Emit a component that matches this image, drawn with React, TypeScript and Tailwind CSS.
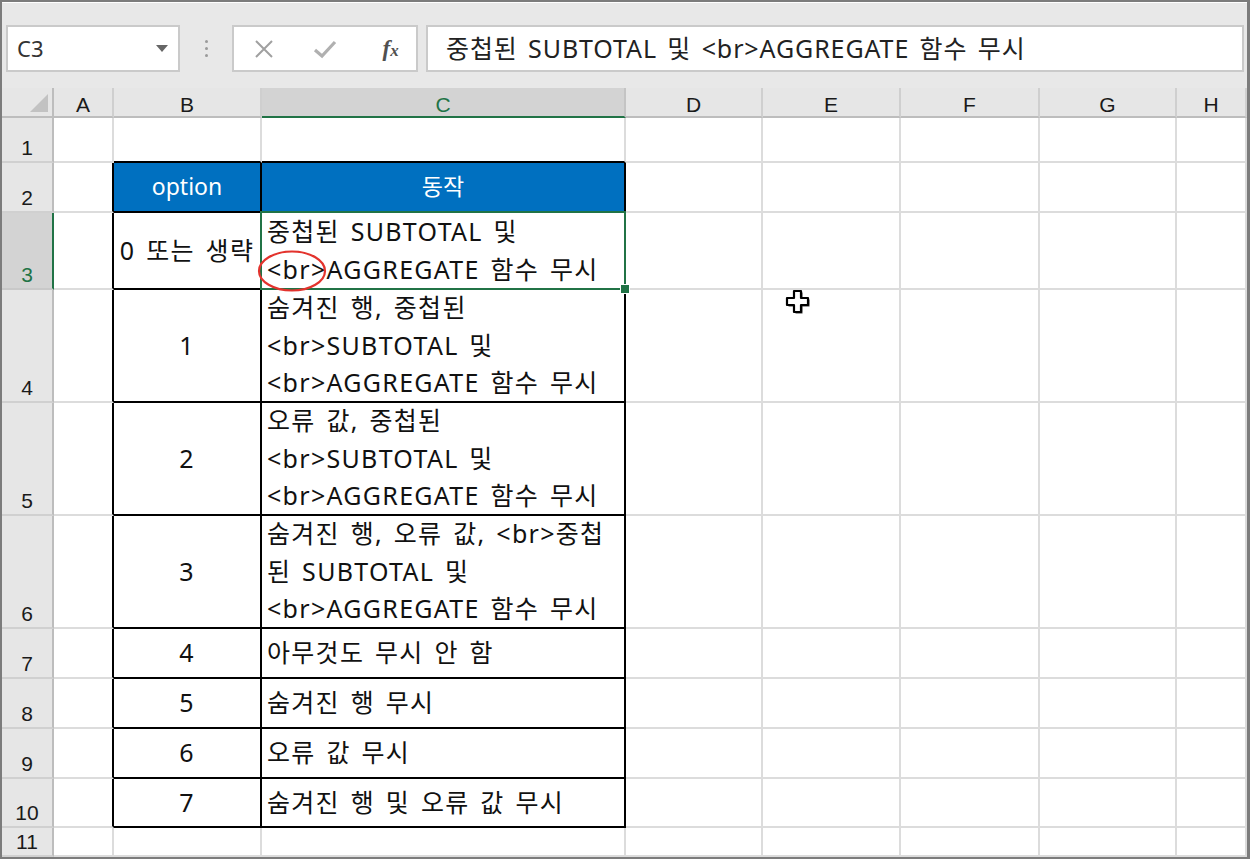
import React from "react";

const COLS = ["A", "B", "C", "D", "E", "F", "G", "H"];

type Row = { n: number; b?: string; c?: string[] };

const ROWS: Row[] = [
  { n: 1 },
  { n: 2, b: "option", c: ["동작"] },
  { n: 3, b: "0 또는 생략", c: ["중첩된 SUBTOTAL 및", "<br>AGGREGATE 함수 무시"] },
  { n: 4, b: "1", c: ["숨겨진 행, 중첩된", "<br>SUBTOTAL 및", "<br>AGGREGATE 함수 무시"] },
  { n: 5, b: "2", c: ["오류 값, 중첩된", "<br>SUBTOTAL 및", "<br>AGGREGATE 함수 무시"] },
  { n: 6, b: "3", c: ["숨겨진 행, 오류 값, <br>중첩", "된 SUBTOTAL 및", "<br>AGGREGATE 함수 무시"] },
  { n: 7, b: "4", c: ["아무것도 무시 안 함"] },
  { n: 8, b: "5", c: ["숨겨진 행 무시"] },
  { n: 9, b: "6", c: ["오류 값 무시"] },
  { n: 10, b: "7", c: ["숨겨진 행 및 오류 값 무시"] },
  { n: 11 },
];

const inTable = (n: number) => n >= 2 && n <= 10;

const textCls =
  "text-[25px] tracking-[1.3px] leading-[37.5px] text-[#111] font-['Noto_Sans','Noto_Sans_CJK_KR',sans-serif] [word-spacing:3px] whitespace-nowrap";

function Toolbar() {
  return (
    <div className="h-[86px] bg-[#e8e8e8] flex items-start pt-[22px] pl-[4px] pr-[3px] border-t border-t-white">
      <div className="w-[174px] h-[47px] bg-white border-2 border-[#cacaca] flex items-center justify-between pl-[9px] pr-[10px]">
        <span className="text-[22px] text-[#333] font-['Noto_Sans',sans-serif]">C3</span>
        <svg width="12" height="7" viewBox="0 0 12 7">
          <path d="M0 0 L12 0 L6 7 Z" fill="#666" />
        </svg>
      </div>
      <div className="w-[52px] h-[47px] flex flex-col items-center justify-center gap-[4px]">
        <span className="w-[3px] h-[3px] rounded-full bg-[#9a9a9a]" />
        <span className="w-[3px] h-[3px] rounded-full bg-[#9a9a9a]" />
        <span className="w-[3px] h-[3px] rounded-full bg-[#9a9a9a]" />
      </div>
      <div className="w-[186px] h-[47px] bg-white border-2 border-[#cacaca] flex items-center">
        <div className="w-[62px] flex justify-center">
          <svg width="20" height="20" viewBox="0 0 20 20">
            <path d="M2 2 L18 18 M18 2 L2 18" stroke="#a0a0a0" strokeWidth="2" />
          </svg>
        </div>
        <div className="w-[62px] flex justify-center">
          <svg width="24" height="20" viewBox="0 0 24 20">
            <path d="M2 11 L9 17 L22 3" stroke="#b0b0b0" strokeWidth="3.2" fill="none" />
          </svg>
        </div>
        <div className="w-[62px] flex justify-center pl-[10px]">
          <span className="italic font-bold text-[23px] text-[#505050] font-['Liberation_Serif',serif] leading-none">
            f<span className="text-[17px]">x</span>
          </span>
        </div>
      </div>
      <div className="ml-[8px] flex-1 h-[47px] bg-white border-2 border-[#cacaca] flex items-center pl-[18px]">
        <span className="text-[25px] tracking-[0.9px] text-[#222] font-['Noto_Sans','Noto_Sans_CJK_KR',sans-serif] [word-spacing:3px] whitespace-nowrap">
          중첩된 SUBTOTAL 및 &lt;br&gt;AGGREGATE 함수 무시
        </span>
      </div>
    </div>
  );
}

function Cursor() {
  return (
    <svg width="28" height="28" viewBox="0 0 28 28" className="absolute left-[21px] top-[-2px] z-20">
      <path
        d="M10 3 H17 V10 H24 V17 H17 V24 H10 V17 H3 V10 H10 Z"
        fill="#3a3a3a"
        transform="translate(1.5 1.5)"
      />
      <path
        d="M10 3 H17 V10 H24 V17 H17 V24 H10 V17 H3 V10 H10 Z"
        fill="white"
        stroke="black"
        strokeWidth="2.2"
        strokeLinejoin="round"
      />
    </svg>
  );
}

function Cell({ row, col }: { row: Row; col: number }) {
  const n = row.n;
  const blackRight = inTable(n) && col <= 2;
  const blackBottom = n <= 10 && (col === 1 || col === 2);
  const rightCls = blackRight ? "border-r-black" : "border-r-[#dcdcdc]";
  const bottomCls = blackBottom ? "border-b-black" : "border-b-[#dcdcdc]";
  const base = `relative border-r-2 border-b-2 ${rightCls} ${bottomCls}`;

  if (n === 2 && (col === 1 || col === 2)) {
    return (
      <div className={`${base} bg-[#0070c0] flex items-center justify-center`}>
        <span className="text-[23px] leading-[37.5px] text-white font-['Noto_Sans','Noto_Sans_CJK_KR',sans-serif] whitespace-nowrap">
          {col === 1 ? row.b : row.c?.[0]}
        </span>
      </div>
    );
  }

  if (col === 1 && row.b) {
    return (
      <div className={`${base} bg-white flex items-center justify-center`}>
        <span className={textCls}>{row.b}</span>
      </div>
    );
  }

  if (col === 2 && row.c) {
    return (
      <div className={`${base} bg-white flex flex-col justify-center pl-[5px]`}>
        {row.c.map((l, i) => (
          <div key={i} className={textCls}>
            {l}
          </div>
        ))}
        {n === 3 && (
          <>
            <div className="absolute -top-[2px] -left-[2px] -right-[2px] -bottom-[2px] border-2 border-[#217346] z-10 pointer-events-none" />
            <div className="absolute -right-[6px] -bottom-[6px] w-[10px] h-[10px] bg-[#217346] border border-white z-10" />
            <svg
              width="72"
              height="44"
              viewBox="0 0 72 44"
              className="absolute left-[-6px] top-[36px] z-20"
            >
              <ellipse cx="36" cy="22" rx="33" ry="19.5" fill="none" stroke="#e3332d" strokeWidth="2.2" />
            </svg>
          </>
        )}
      </div>
    );
  }

  return (
    <div className={`${base} bg-white`}>
      {n === 4 && col === 4 && <Cursor />}
    </div>
  );
}

export default function App() {
  return (
    <div className="w-[1250px] h-[859px] overflow-hidden border-2 border-r-[3px] border-[#7c7c7c] bg-white flex flex-col">
      <Toolbar />
      <div className="grid grid-cols-[52px_60px_148px_364px_137px_138px_139px_137px_1fr] grid-rows-[30px_45px_50px_77px_113px_113px_113px_50px_50px_50px_49px_29px]">
        {/* corner */}
        <div className="bg-[#e6e6e6] border-r-2 border-b-2 border-r-[#bdbdbd] border-b-[#bdbdbd] flex items-end justify-end pr-[4px] pb-[4px]">
          <svg width="18" height="18" viewBox="0 0 18 18">
            <path d="M18 0 L18 18 L0 18 Z" fill="#c2c2c2" />
          </svg>
        </div>
        {COLS.map((c) =>
          c === "C" ? (
            <div
              key={c}
              className="bg-[#d3d3d3] border-r-2 border-b-2 border-r-[#c4c4c4] border-b-[#217346] flex items-center justify-center pt-[4px]"
            >
              <span className="text-[21px] text-[#217346] font-['Liberation_Sans',sans-serif] leading-none">{c}</span>
            </div>
          ) : (
            <div
              key={c}
              className="bg-[#e6e6e6] border-r-2 border-b-2 border-r-[#cfcfcf] border-b-[#bdbdbd] flex items-center justify-center pt-[4px]"
            >
              <span className="text-[21px] text-[#1a1a1a] font-['Liberation_Sans',sans-serif] leading-none">{c}</span>
            </div>
          )
        )}
        {ROWS.map((row) => (
          <React.Fragment key={row.n}>
            {row.n === 3 ? (
              <div className="bg-[#d3d3d3] border-r-2 border-b-2 border-r-[#217346] border-b-[#c8c8c8] flex items-end justify-center pb-[3px]">
                <span className="text-[21px] text-[#217346] font-['Liberation_Sans',sans-serif] leading-none">{row.n}</span>
              </div>
            ) : (
              <div className="bg-[#e6e6e6] border-r-2 border-b-2 border-r-[#bdbdbd] border-b-[#d0d0d0] flex items-end justify-center pb-[3px]">
                <span className="text-[21px] text-[#1a1a1a] font-['Liberation_Sans',sans-serif] leading-none">{row.n}</span>
              </div>
            )}
            {COLS.map((c, i) => (
              <Cell key={c} row={row} col={i} />
            ))}
          </React.Fragment>
        ))}
      </div>
    </div>
  );
}
